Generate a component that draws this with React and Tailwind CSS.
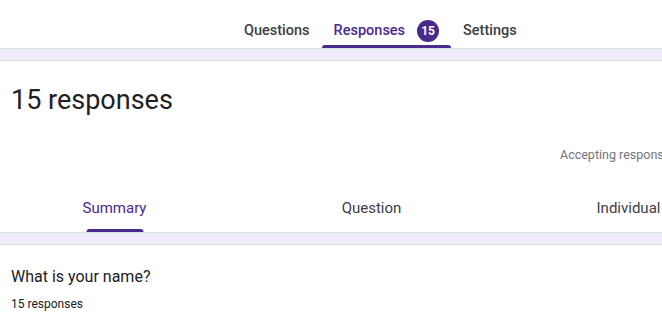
const topTabs = [
  { label: "Questions", active: false },
  { label: "Responses", active: true, badge: 15 },
  { label: "Settings", active: false },
];

const subTabs = [
  { label: "Summary", active: true },
  { label: "Question", active: false },
  { label: "Individual", active: false },
];

const Band = () => (
  <div className="h-[13px] bg-[#f0ebf8] border-y border-[#dadce0]" />
);

const App = () => {
  return (
    <div className="w-[662px] h-[328px] overflow-hidden bg-white font-['Roboto',sans-serif] text-[#202124]">
      {/* Top tabs */}
      <div className="h-12 flex items-end pl-[232px]">
        {topTabs.map((tab) => (
          <div
            key={tab.label}
            className="relative h-12 flex items-center pt-[13px] px-3"
          >
            <span
              className={`text-[14.5px] font-medium ${
                tab.active ? "text-[#4a2a8c]" : "text-[#3c4043]"
              }`}
            >
              {tab.label}
            </span>
            {tab.badge && (
              <span className="ml-3 w-[22px] h-[22px] rounded-full bg-[#4a2a8c] text-white text-[12px] font-bold flex items-center justify-center">
                {tab.badge}
              </span>
            )}
            {tab.active && (
              <div className="absolute left-0 right-0 bottom-0 h-[3px] rounded-t-[3px] bg-[#4a2a8c]" />
            )}
          </div>
        ))}
      </div>

      <Band />

      {/* Summary card */}
      <div className="bg-white">
        <h1 className="pl-[11px] pt-[21px] text-[27px] leading-[36px] text-[#202124]">
          15 responses
        </h1>
        <div className="h-[47px] flex items-end pl-[560px] whitespace-nowrap">
          <span className="text-[12.5px] text-[#70757a]">
            Accepting responses
          </span>
        </div>
        <div className="flex ml-[-14px] mt-[20px]">
          {subTabs.map((tab) => (
            <div
              key={tab.label}
              className="relative w-[257px] flex-none h-[47px] flex items-center justify-center"
            >
              <span
                className={`text-[15px] ${
                  tab.active ? "text-[#4a2a8c]" : "text-[#3c4043]"
                }`}
              >
                {tab.label}
              </span>
              {tab.active && (
                <div className="absolute bottom-0 left-1/2 -translate-x-1/2 w-[57px] h-[3px] rounded-t-[3px] bg-[#4a2a8c]" />
              )}
            </div>
          ))}
        </div>
      </div>

      <Band />

      {/* Question card */}
      <div className="pl-[11px] pt-[21px]">
        <h2 className="text-[16px] leading-[22px] text-[#202124]">
          What is your name?
        </h2>
        <p className="mt-[7px] text-[12px] text-[#202124]">15 responses</p>
      </div>
    </div>
  );
};

export default App;
